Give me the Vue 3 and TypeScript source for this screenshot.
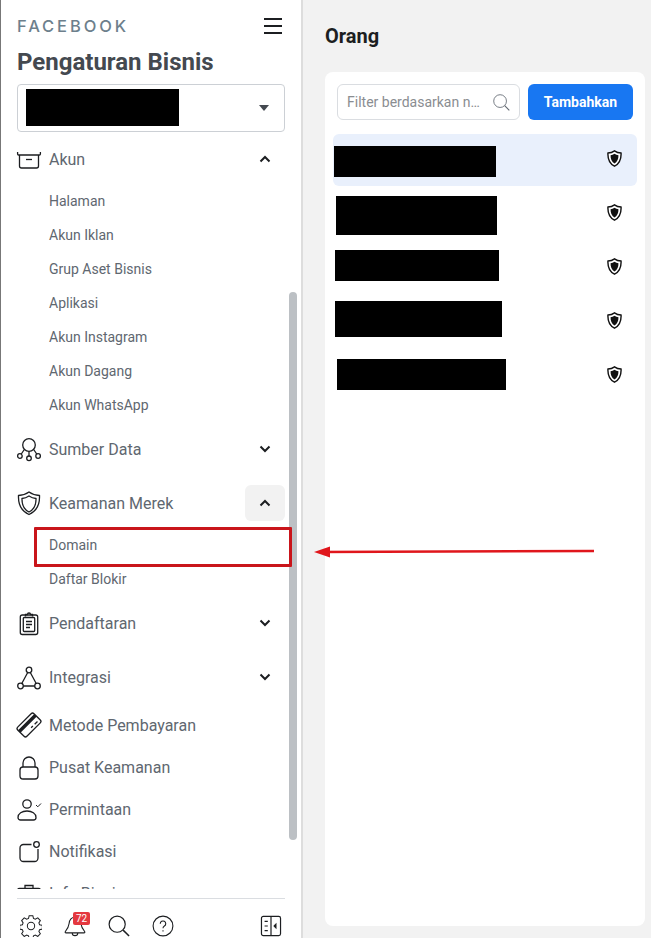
<script setup lang="ts">
interface SubItem { label: string }
interface NavGroup {
  label: string
  icon: string
  open?: boolean
  active?: boolean
  expandable: boolean
  subs?: SubItem[]
}
const groups: NavGroup[] = [
  { label: 'Akun', icon: 'box', expandable: true, open: true, subs: ['Halaman','Akun Iklan','Grup Aset Bisnis','Aplikasi','Akun Instagram','Akun Dagang','Akun WhatsApp'].map(label => ({ label })) },
  { label: 'Sumber Data', icon: 'nodes', expandable: true },
  { label: 'Keamanan Merek', icon: 'shield', expandable: true, open: true, active: true, subs: ['Domain','Daftar Blokir'].map(label => ({ label })) },
  { label: 'Pendaftaran', icon: 'clip', expandable: true },
  { label: 'Integrasi', icon: 'tri', expandable: true },
  { label: 'Metode Pembayaran', icon: 'card', expandable: false },
  { label: 'Pusat Keamanan', icon: 'lock', expandable: false },
  { label: 'Permintaan', icon: 'person', expandable: false },
  { label: 'Notifikasi', icon: 'notif', expandable: false },
  { label: 'Info Bisnis', icon: 'case', expandable: false },
]
const people = [
  { left: 1, top: 12, width: 162, height: 31, selected: true },
  { left: 3, top: 8, width: 161, height: 39, selected: false },
  { left: 2, top: 8, width: 164, height: 31, selected: false },
  { left: 2, top: 5, width: 167, height: 36, selected: false },
  { left: 4, top: 9, width: 169, height: 31, selected: false },
]
</script>

<template>
  <div class="page">
    <aside class="side">
      <div class="top">
        <div class="brand-row">
          <span class="brand">FACEBOOK</span>
          <span class="burger"><i></i><i></i><i></i></span>
        </div>
        <h1 class="title">Pengaturan Bisnis</h1>
        <div class="select">
          <span class="redact-select"></span>
          <span class="caret"></span>
        </div>
      </div>

      <nav class="scroll">
        <div class="scroll-inner">
          <div v-for="g in groups" :key="g.label" class="group">
            <div class="head" :class="{ tall: g.expandable }">
              <svg class="ico" viewBox="0 0 24 24" fill="none" stroke="#1c1e21" stroke-width="1.3">
                <template v-if="g.icon === 'box'">
                  <rect x="0.6" y="3" width="22.8" height="5" rx="1" />
                  <path d="M2.5 8v11a2 2 0 0 0 2 2h15a2 2 0 0 0 2-2V8" />
                  <path d="M9 12.5h6" />
                </template>
                <template v-else-if="g.icon === 'nodes'">
                  <circle cx="12" cy="8" r="6.3" />
                  <circle cx="2.9" cy="19" r="2.3" />
                  <circle cx="12" cy="21.3" r="2.3" />
                  <circle cx="21.1" cy="19" r="2.3" />
                  <path d="M12 14.3V19M7.3 12.5 4.3 17M16.7 12.5l3 4.500" />
                </template>
                <template v-else-if="g.icon === 'shield'">
                  <path d="M12 1c3 2.200 6.500 3.300 10.500 3.500.4 9-2.500 15.500-10.500 19C4 20 1.100 13.500 1.500 4.500 5.500 4.300 9 3.200 12 1z" />
                  <path d="M12 5c2.200 1.500 4.500 2.300 7 2.500.2 6.200-2 11-7 13.500-5-2.500-7.200-7.300-7-13.500 2.500-.2 4.800-1 7-2.500z" />
                </template>
                <template v-else-if="g.icon === 'clip'">
                  <rect x="3.300" y="4" width="17.400" height="19.500" rx="2" />
                  <rect x="6.300" y="6.500" width="11.400" height="14" rx="1" />
                  <path d="M8.500 5.500V3.500h2a1.500 1.500 0 0 1 3 0h2v2" />
                  <path d="M9 10.500h6M9 13.500h6M9 16.500h4" />
                </template>
                <template v-else-if="g.icon === 'tri'">
                  <circle cx="12" cy="5" r="2.800" />
                  <circle cx="3.500" cy="21" r="2.800" />
                  <circle cx="20.500" cy="21" r="2.800" />
                  <path d="M10.700 7.500 4.800 18.500M13.300 7.500l5.900 11M6.300 21h11.400" />
                </template>
                <template v-else-if="g.icon === 'card'">
                  <g transform="rotate(-45 12 12)">
                    <rect x="0.500" y="5.500" width="23" height="13" rx="2" />
                    <rect x="0.500" y="8" width="23" height="3.500" fill="#1c1e21" stroke="none" />
                    <path d="M16.500 15.500h4M11.500 15.500h2.500" />
                  </g>
                </template>
                <template v-else-if="g.icon === 'lock'">
                  <rect x="3" y="12" width="18" height="12" rx="3" />
                  <path d="M6 12V8a6 6 0 0 1 12 0v4" />
                </template>
                <template v-else-if="g.icon === 'person'">
                  <circle cx="10" cy="7" r="4.200" />
                  <path d="M3.500 23h13a2.500 2.500 0 0 0 2.500-2.500c0-4-4-6.500-9-6.500s-9 2.500-9 6.500A2.500 2.500 0 0 0 3.500 23z" />
                  <path d="m19 8 1.800 1.800L24 6.500" stroke-width="1" />
                </template>
                <template v-else-if="g.icon === 'notif'">
                  <circle cx="19.500" cy="5.500" r="2.800" />
                  <path d="M14.500 5.500H6.500a3.500 3.500 0 0 0-3.500 3.500v10a3.500 3.500 0 0 0 3.500 3.500h11a3.500 3.500 0 0 0 3.500-3.500v-9" />
                </template>
                <template v-else>
                  <path d="M0.600 8.500h22.800M8 7.500V4.500h8v3" />
                  <rect x="0.600" y="7.500" width="22.800" height="15" rx="2" />
                </template>
              </svg>
              <span class="label">{{ g.label }}</span>
              <span v-if="g.expandable" class="toggle" :class="{ on: g.active }">
                <svg viewBox="0 0 12 8" width="12" height="8" fill="none" stroke="#1c1e21" stroke-width="2">
                  <path :d="g.open ? 'M1.500 6.500 6 2l4.500 4.500' : 'M1.500 1.500 6 6l4.500-4.500'" />
                </svg>
              </span>
            </div>
            <ul v-if="g.subs" class="subs">
              <li v-for="s in g.subs" :key="s.label">{{ s.label }}</li>
            </ul>
          </div>
        </div>
      </nav>

      <footer class="foot">
        <svg class="f-ico" viewBox="0 0 24 24" fill="none" stroke="#1c1e21" stroke-width="1.100">
          <circle cx="12" cy="12" r="4" />
          <path d="M10 .8h4l.7 3 2 .9 2.700-1.500 2.800 2.900-1.600 2.500.8 2 3 .7v4l-3 .7-.8 2 1.600 2.500-2.800 2.900-2.700-1.500-2 .9-.7 3h-4l-.7-3-2-.9-2.700 1.500-2.800-2.900 1.600-2.500-.8-2-3-.7v-4l3-.7.8-2-1.600-2.500 2.800-2.900 2.700 1.500 2-.9z" />
        </svg>
        <span class="bell">
          <svg class="f-ico" viewBox="0 0 24 24" fill="none" stroke="#1c1e21" stroke-width="1.200">
            <path d="M12 2.500c-4 0-6 3-6.500 7-.4 3.500-2 6-4 8.500-.5.700-.2 1.500.7 1.500h19.600c.9 0 1.200-.8.700-1.500-2-2.500-3.600-5-4-8.500-.5-4-2.500-7-6.500-7z" />
            <path d="M9 19.500a3 3 0 0 0 6 0" />
          </svg>
          <b class="badge">72</b>
        </span>
        <svg class="f-ico" viewBox="0 0 24 24" fill="none" stroke="#1c1e21" stroke-width="1.300">
          <circle cx="10" cy="10" r="8.800" />
          <path d="m16.500 16.500 6.500 6.500" stroke-width="1.600" />
        </svg>
        <svg class="f-ico" viewBox="0 0 24 24" fill="none" stroke="#1c1e21" stroke-width="1.200">
          <circle cx="12" cy="12" r="10.800" />
          <path d="M9 9.500a3 3 0 1 1 4.500 2.600c-1 .6-1.500 1.200-1.500 2.400" />
          <path d="M12 16.500v1.500" />
        </svg>
        <svg class="f-ico panel" viewBox="0 0 24 24" fill="none" stroke="#1c1e21" stroke-width="1.300">
          <rect x="1.600" y="1.600" width="20.800" height="20.800" rx="2" />
          <path d="M12 1.600v20.800M5 7h3.500M5 12h3.500M5 17h3.500" />
          <path d="M18 8.500v7L14.500 12z" fill="#1c1e21" stroke="none" />
        </svg>
      </footer>

      <div class="thumb"></div>
    </aside>

    <main class="main">
      <h2 class="heading">Orang</h2>
      <section class="card">
        <div class="tools">
          <div class="search">
            <span class="ph">Filter berdasarkan n…</span>
            <svg viewBox="0 0 24 24" width="17" height="17" fill="none" stroke="#606770" stroke-width="1.200">
              <circle cx="10" cy="10" r="9" />
              <path d="m16.500 16.500 6.500 6.500" stroke-width="1.500" />
            </svg>
          </div>
          <button class="add" type="button">Tambahkan</button>
        </div>
        <div class="list">
          <div v-for="(p, i) in people" :key="i" class="person" :class="{ sel: p.selected }">
            <span class="redact" :style="{ left: p.left + 'px', top: p.top + 'px', width: p.width + 'px', height: p.height + 'px' }"></span>
            <svg class="badge-shield" viewBox="0 0 16 18" width="15" height="17">
              <path d="M8 .8c2 1.400 4.300 2.200 7 2.400.3 6.500-1.800 11.300-7 14C2.800 14.500.7 9.700 1 3.200 3.700 3 6 2.200 8 .8z" fill="#fff" stroke="#111" stroke-width="1.500" />
              <path d="M8 4c1.300.8 2.700 1.300 4.200 1.500.1 3.800-1.100 6.800-4.200 8.700-3.100-1.900-4.300-4.900-4.200-8.700C5.300 5.300 6.700 4.800 8 4z" fill="#111" />
            </svg>
          </div>
        </div>
      </section>
    </main>

    <div class="mark"></div>
    <svg class="arrow" viewBox="0 0 300 20" width="300" height="20">
      <path d="M294 10 L20 11" stroke="#e0161c" stroke-width="2.500" fill="none" />
      <path d="M14 11 30 5.500v11z" fill="#e0161c" />
    </svg>
  </div>
</template>

<style>
html, body { margin: 0; background: #f2f2f2; }
</style>

<style scoped>
.page {
  position: relative;
  display: flex;
  width: 651px;
  height: 938px;
  overflow: hidden;
  background: #f2f2f2;
  font-family: Roboto, "Liberation Sans", sans-serif;
}
.side {
  position: relative;
  box-sizing: border-box;
  display: flex;
  flex-direction: column;
  flex: 0 0 303px;
  height: 938px;
  background: #fff;
  border-left: 1px solid #777;
  border-right: 2px solid #ddd;
}
.top { flex: none; padding: 0 16px; height: 152px; box-sizing: border-box; }
.brand-row {
  display: flex;
  align-items: center;
  justify-content: space-between;
  height: 52px;
  padding-right: 3px;
}
.brand {
  font-family: Inter, "Open Sans", sans-serif;
  font-size: 16.500px;
  font-weight: 500;
  letter-spacing: 2.900px;
  color: #6d7f8c;
}
.burger { display: flex; flex-direction: column; gap: 5px; width: 18px; }
.burger i { display: block; height: 2px; background: #1c1e21; }
.title {
  margin: -3px 0 0;
  font-size: 24px;
  line-height: 26px;
  font-weight: 700;
  color: #444950;
}
.select {
  box-sizing: border-box;
  display: flex;
  align-items: center;
  justify-content: space-between;
  height: 48px;
  margin-top: 9px;
  padding: 0 15px 2px 8px;
  border: 1px solid #ccd0d5;
  border-radius: 4px;
}
.redact-select { width: 153px; height: 37px; background: #000; }
.caret {
  width: 0;
  height: 0;
  margin-top: 2px;
  border-left: 5.500px solid transparent;
  border-right: 5.500px solid transparent;
  border-top: 6px solid #444950;
}
.scroll { flex: none; height: 737px; overflow: hidden; }
.scroll-inner { margin-top: -20px; padding: 0 16px; }
.head {
  display: flex;
  align-items: center;
  height: 42px;
}
.head.tall { height: 54px; }
.ico { width: 24px; height: 24px; flex: none; overflow: visible; }
.label {
  margin-left: 8px;
  font-size: 16px;
  color: #606770;
}
.toggle {
  display: flex;
  align-items: center;
  justify-content: center;
  width: 40px;
  height: 36px;
  margin-left: auto;
  border-radius: 6px;
}
.toggle.on { background: #f2f2f2; }
.subs { margin: -2px 0 0; padding: 0 0 0 32px; list-style: none; }
.subs li {
  height: 34px;
  line-height: 34px;
  font-size: 14px;
  color: #606770;
}
.foot {
  flex: none;
  display: flex;
  align-items: center;
  gap: 22px;
  box-sizing: border-box;
  height: 40px;
  margin: 9px 16px 0;
  padding: 14px 3px 0;
  border-top: 1px solid #dadde1;
}
.f-ico { width: 22px; height: 22px; flex: none; display: block; }
.panel { margin-left: auto; }
.bell { position: relative; display: block; }
.badge {
  position: absolute;
  left: 9px;
  top: -3px;
  width: 17px;
  height: 13px;
  border-radius: 2px;
  background: #e4383f;
  color: #fff;
  font-size: 10px;
  line-height: 13px;
  font-weight: 400;
  text-align: center;
}
.thumb {
  position: absolute;
  left: 288px;
  top: 292px;
  width: 8px;
  height: 548px;
  border-radius: 4px;
  background: #bcc0c4;
}
.main { flex: 1; padding: 0 6px 12px 22px; display: flex; flex-direction: column; }
.heading {
  margin: 0;
  height: 72px;
  line-height: 72px;
  font-size: 20px;
  font-weight: 700;
  color: #1c1e21;
}
.card {
  flex: 1;
  box-sizing: border-box;
  padding: 12px 8px;
  background: #fff;
  border-radius: 8px;
}
.tools { display: flex; gap: 8px; padding: 0 4px; height: 36px; }
.search {
  box-sizing: border-box;
  display: flex;
  align-items: center;
  justify-content: space-between;
  width: 183px;
  padding: 0 9px;
  border: 1px solid #dadde1;
  border-radius: 6px;
}
.ph { font-size: 14px; color: #8a8d91; white-space: nowrap; }
.add {
  width: 105px;
  border: 0;
  padding: 0;
  border-radius: 6px;
  background: #1877f2;
  color: #fff;
  font-family: inherit;
  font-size: 14px;
  font-weight: 700;
}
.list { margin-top: 14px; display: flex; flex-direction: column; gap: 2px; }
.person {
  position: relative;
  display: flex;
  align-items: center;
  justify-content: flex-end;
  height: 52px;
  padding: 0 15px 4px 0;
  box-sizing: border-box;
  border-radius: 6px;
}
.person.sel { background: #e9f0fc; }
.redact { position: absolute; background: #000; }
.mark {
  position: absolute;
  left: 34px;
  top: 527px;
  box-sizing: border-box;
  width: 258px;
  height: 40px;
  border: 3px solid #c9151b;
  border-radius: 1px;
}
.arrow { position: absolute; left: 300px; top: 541px; }
</style>
